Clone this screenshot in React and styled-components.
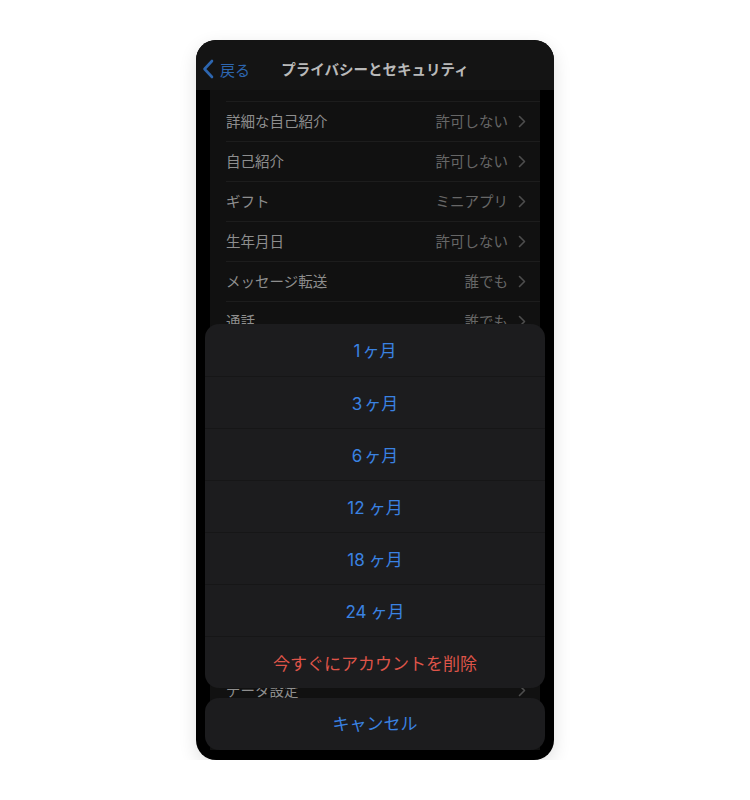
import React from "react";
import styled, { createGlobalStyle } from "styled-components";

const Global = createGlobalStyle`
  html, body { margin: 0; padding: 0; background: #ffffff; }
  body { font-family: "Noto Sans CJK JP", "Noto Sans", Inter, sans-serif; }
  * { box-sizing: border-box; }
`;

const Page = styled.div`
  display: flex;
  justify-content: center;
  padding-top: 40px;
  width: 750px;
`;

const Phone = styled.div`
  position: relative;
  width: 358px;
  height: 720px;
  border-radius: 20px;
  overflow: hidden;
  background: #000;
  box-shadow: 0 6px 18px rgba(0, 0, 0, 0.12);
  display: flex;
  flex-direction: column;
`;

const NavBar = styled.div`
  height: 50px;
  flex: none;
  background: #141414;
  display: flex;
  align-items: center;
  position: relative;
  padding: 8px 0 0 6px;
`;

const Back = styled.div`
  display: flex;
  align-items: center;
  gap: 6px;
  color: #2d66b0;
  font-size: 15px;
  line-height: 1;
`;

const Title = styled.div`
  position: absolute;
  left: 0;
  right: 0;
  top: 8px;
  bottom: 0;
  display: flex;
  align-items: center;
  justify-content: center;
  font-size: 14.5px;
  font-weight: 700;
  color: #b9b9b9;
  line-height: 1;
  pointer-events: none;
`;

const Content = styled.div`
  flex: 1;
  padding: 0 14px;
  overflow: hidden;
`;

const Group = styled.div`
  background: #111111;
  margin-bottom: ${(p) => p.$gap || 0}px;
`;

const Row = styled.div`
  height: 40px;
  display: flex;
  align-items: center;
  margin-left: 16px;
  padding-right: 14px;
  border-top: 1px solid #1d1d1d;
  font-size: 14.5px;
  line-height: 1;
  color: #8e8e8e;
`;

const Label = styled.span`
  flex: 1;
`;

const Value = styled.span`
  color: #676767;
  margin-right: 10px;
`;

const Stub = styled.div`
  height: 11px;
  background: #111111;
`;

const Sheet = styled.div`
  position: absolute;
  left: 9px;
  right: 9px;
  bottom: 10px;
  display: flex;
  flex-direction: column;
  gap: 10px;
`;

const SheetGroup = styled.div`
  background: #1c1c1e;
  border-radius: 14px;
  overflow: hidden;
`;

const SheetItem = styled.div`
  height: 52px;
  display: flex;
  align-items: center;
  justify-content: center;
  padding-top: ${(p) => (p.$cancel ? 0 : 3)}px;
  font-family: Inter, "Noto Sans CJK JP", sans-serif;
  font-size: 17px;
  line-height: 1;
  color: ${(p) => (p.$danger ? "#df5449" : "#3a82e2")};
  border-top: ${(p) => (p.$first ? "none" : "1px solid #161617")};
`;

const Unit = styled.span`
  margin-left: ${(p) => p.$gap}px;
`;

const Chevron = () => (
  <svg width="8" height="13" viewBox="0 0 8 13">
    <path d="M1.5 1.5 L6.5 6.5 L1.5 11.5" fill="none" stroke="#4d4d4d" strokeWidth="1.6" strokeLinecap="round" strokeLinejoin="round" />
  </svg>
);

const BackChevron = () => (
  <svg width="12" height="20" viewBox="0 0 12 20">
    <path d="M10 2 L2.5 10 L10 18" fill="none" stroke="#2d66b0" strokeWidth="2.6" strokeLinecap="round" strokeLinejoin="round" />
  </svg>
);

const rows1 = [
  ["詳細な自己紹介", "許可しない"],
  ["自己紹介", "許可しない"],
  ["ギフト", "ミニアプリ"],
  ["生年月日", "許可しない"],
  ["メッセージ転送", "誰でも"],
  ["通話", "誰でも"],
  ["リンク", "誰でも"],
  ["グループ", "誰でも"],
  ["電話番号", "誰でも"],
  ["プロフィール写真", "誰でも"],
  ["オンライン状態", "誰でも"],
  ["ボイスメッセージ", "誰でも"],
  ["パスコードロック", "オフ"],
  ["二段階認証", "オフ"],
];

const rows2 = [
  ["データ設定", ""],
  ["アカウント", ""],
];

const options = ["1ヶ月", "3ヶ月", "6ヶ月", "12ヶ月", "18ヶ月", "24ヶ月"];

const fmt = (s) => {
  const m = s.match(/^(\d+)(.*)$/);
  return (
    <>
      <span>{m[1]}</span>
      <Unit $gap={m[1].length > 1 ? 4 : 2}>{m[2]}</Unit>
    </>
  );
};

export default function App() {
  return (
    <>
      <Global />
      <Page>
        <Phone>
          <NavBar>
            <Back>
              <BackChevron />
              <span>戻る</span>
            </Back>
            <Title>プライバシーとセキュリティ</Title>
          </NavBar>
          <Content>
            <Stub />
            <Group $gap={9}>
              {rows1.map(([l, v]) => (
                <Row key={l}>
                  <Label>{l}</Label>
                  <Value>{v}</Value>
                  <Chevron />
                </Row>
              ))}
            </Group>
            <Group>
              {rows2.map(([l, v]) => (
                <Row key={l}>
                  <Label>{l}</Label>
                  <Value>{v}</Value>
                  <Chevron />
                </Row>
              ))}
            </Group>
          </Content>
          <Sheet>
            <SheetGroup>
              {options.map((o, i) => (
                <SheetItem key={o} $first={i === 0}>
                  {fmt(o)}
                </SheetItem>
              ))}
              <SheetItem $danger>今すぐにアカウントを削除</SheetItem>
            </SheetGroup>
            <SheetGroup>
              <SheetItem $first $cancel>キャンセル</SheetItem>
            </SheetGroup>
          </Sheet>
        </Phone>
      </Page>
    </>
  );
}
